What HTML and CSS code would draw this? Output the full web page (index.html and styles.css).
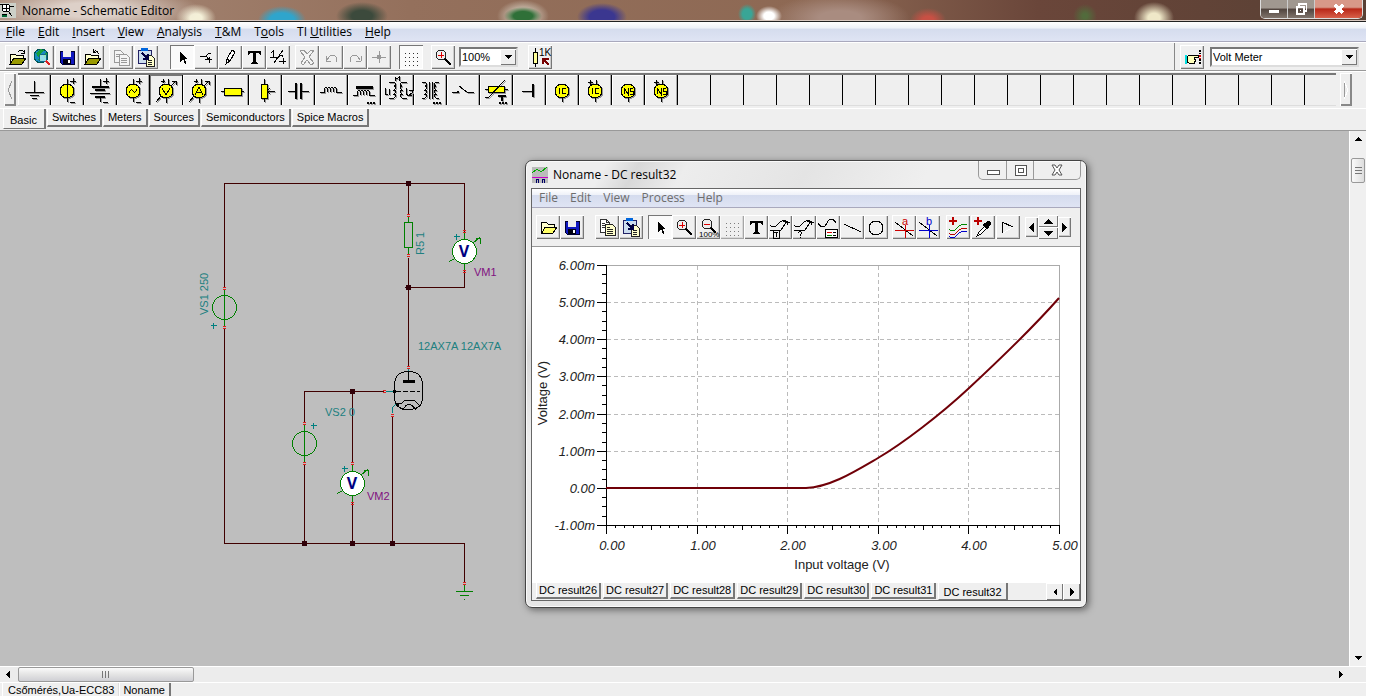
FILE: index.html
```html
<!DOCTYPE html>
<html lang="en">
<head>
<meta charset="utf-8">
<title>Noname - Schematic Editor</title>
<link rel="stylesheet" href="styles.css">
</head>
<body>
<svg class="defs" aria-hidden="true">
  <defs>
    <symbol id="open" viewBox="0 0 24 24">
      <path d="M5 18V9h5l1 1h7v3" fill="#ffc" stroke="#000"/><path d="M5 19l4-6h12l-4 6z" fill="#990" stroke="#000"/>
      <path d="M13 7q3-3 6 0m-3 1h3V5" fill="none" stroke="#000"/>
    </symbol>
    <symbol id="openb" viewBox="0 0 24 24">
      <path d="M5 18V9h5l1 1h7v3" fill="#ffc" stroke="#000"/><path d="M5 19l4-6h12l-4 6z" fill="#990" stroke="#000"/>
      <path d="M13 7q3-3 6 2m-6-5v3h3" fill="none" stroke="#000"/>
    </symbol>
    <symbol id="folder" viewBox="0 0 24 24">
      <path d="M5 18V8l2-1h3l2 2h6v3" fill="#ffc" stroke="#000"/><path d="M6 18l3-6h12l-4 6z" fill="#ff6" stroke="#000"/>
    </symbol>
    <symbol id="save" viewBox="0 0 24 24">
      <path d="M5 6h14v13H7l-2-2z" fill="#1018c0" stroke="#000030"/><path d="M8 6h8v6H8z" fill="#eee"/><path d="M8 14h8v5H8z" fill="#001"/><path d="M13 15h2v3h-2z" fill="#fff"/>
    </symbol>
    <symbol id="web" viewBox="0 0 24 24">
      <circle cx="11" cy="11" r="7" fill="#168cc0" stroke="#055"/><path d="M6 8l4-4 4 1-3 3 1 3-4 1zM13 9l4-1v4l-3 1zM7 14l4 0v3z" fill="#18a03c"/>
      <circle cx="13" cy="13" r="4" fill="#cff" fill-opacity=".7" stroke="#168"/><path d="M16 16l4 4" stroke="#d22" stroke-width="2"/>
    </symbol>
    <symbol id="copy" viewBox="0 0 24 24">
      <path d="M5 4h6l3 3v10H5zM11 4v3h3M7 8h3M7 10h4M7 12h4" fill="#fff" stroke="#333"/>
      <path d="M10 9h7l3 3v8H10zM12 12h3M12 14h6M12 16h6M12 18h6" fill="#ffc" stroke="#222"/>
    </symbol>
    <symbol id="copyg" viewBox="0 0 24 24">
      <path d="M5 5h6l3 3v9H5zM7 9h4M7 11h4" fill="#f4f4f4" stroke="#999"/><path d="M10 9h7l3 3v8H10zM12 13h6M12 15h6M12 17h6" fill="#f4f4f4" stroke="#999"/>
    </symbol>
    <symbol id="paste" viewBox="0 0 24 24">
      <path d="M4 5h13v13H4z" fill="#cde" stroke="#226"/><path d="M7 3h7v3H7z" fill="#06d"/><path d="M12 10h5l3 3v8h-8zM14 15h4M14 17h4M14 19h4" fill="#ffc" stroke="#222"/><path d="M8 8l5 5M9 14h5V9" fill="none" stroke="#004" stroke-width="2"/>
    </symbol>
    <symbol id="cursor" viewBox="0 0 24 24"><path d="M10 7v10l3-3 2 5 1-1-1-4h3z"/></symbol>
    <symbol id="wire" viewBox="0 0 24 24"><path d="M6 11h6M17 8h-2l-3 3 4 5M11 14h7M15 12v6" fill="none" stroke="#000"/></symbol>
    <symbol id="pencil" viewBox="0 0 24 24"><path d="M8 19l1-5 5-9 3 2-5 9zM9 14l3 2" fill="#fff" stroke="#000"/></symbol>
    <symbol id="tee" viewBox="0 0 24 24"><path d="M6 6h13v4h-1l-1-2h-3v9l2 1v1H9v-1l2-1V8H8l-1 2H6z"/></symbol>
    <symbol id="ratio" viewBox="0 0 24 24"><path d="M5 8l2-2v6M4 12h6M17 5L8 18M10 12h3q2-4 4 0M13 16h7M17 13v6" fill="none" stroke="#000"/></symbol>
    <symbol id="del" viewBox="0 0 24 24"><path d="M6 5h3l3 4 4-4h3l-5 7 5 6-3 2-4-5-4 5-2-2 4-6-5-6z" fill="#f4f4f4" stroke="#999"/></symbol>
    <symbol id="undo" viewBox="0 0 24 24"><path d="M7 16v-5M7 16h5M8 15q4-8 9-3 2 2 0 5" fill="none" stroke="#999"/></symbol>
    <symbol id="redo" viewBox="0 0 24 24"><path d="M18 16v-5M18 16h-5M17 15q-4-8-9-3-2 2 0 5" fill="none" stroke="#999"/></symbol>
    <symbol id="node" viewBox="0 0 24 24"><path d="M5 12h14M12 6v12" stroke="#999"/><path d="M10 10h4v4h-4z" fill="#999"/></symbol>
    <symbol id="grid" viewBox="0 0 24 24"><path d="M6 8h14M6 12h14M6 16h14M6 20h14" stroke="#333" stroke-dasharray="1 3"/></symbol>
    <symbol id="zoom" viewBox="0 0 24 24"><circle cx="10" cy="10" r="5" fill="#eee" stroke="#222"/><path d="M7 10h6M10 7v6" stroke="#d00" stroke-width="1"/><path d="M14 14l6 6" stroke="#000" stroke-width="2"/></symbol>
    <symbol id="zoomout" viewBox="0 0 24 24"><circle cx="11" cy="9" r="5" fill="#eee" stroke="#222"/><path d="M8 9h6" stroke="#d00"/><path d="M15 13l5 5" stroke="#000" stroke-width="2"/><text x="3" y="22" font-size="8">100%</text></symbol>
    <symbol id="res1k" viewBox="0 0 24 24"><path d="M5 7h4v11H5zM7 3v4M7 18v4" fill="#ff9" stroke="#000"/><path d="M15 14l6 6M15 19v-5h6" fill="none" stroke="#700" stroke-width="2"/><text x="11" y="11" font-size="10">1K</text></symbol>
    <symbol id="hand" viewBox="0 0 24 24"><path d="M5 10h2v9H5z" fill="#0dd"/><path d="M8 11l3-1h7v2h-4v2h1v2h-1v2H9l-2-1z" fill="#ffb" stroke="#000"/><path d="M20 5v4M20 14v6" stroke="#000" stroke-width="2" stroke-dasharray="2 1"/><path d="M20 10v4" stroke="#d00" stroke-width="2" stroke-dasharray="2 1"/></symbol>
    <symbol id="curvet" viewBox="0 0 24 24"><path d="M2 10q4 4 7 0t7-5l6 3M2 15h11l6-9M15 6h4v4" fill="none" stroke="#000"/><path d="M5 17h5M8 17v5M5 15v8h6v-8" fill="none" stroke="#000"/></symbol>
    <symbol id="curveq" viewBox="0 0 24 24"><path d="M2 10q4 4 7 0t7-5l6 3M2 15h11l6-9M15 6h4v4" fill="none" stroke="#000"/><path d="M6 18q2-3 4 0l-2 2v1M8 22v1" fill="none" stroke="#000"/></symbol>
    <symbol id="legend" viewBox="0 0 24 24"><path d="M2 8q5 8 9 0t9 0" fill="none" stroke="#000"/><path d="M9 14h12v8H9z" fill="#fff" stroke="#000"/><path d="M11 17h5" stroke="#d00"/><path d="M11 20h5" stroke="#080"/><path d="M17 17h3M17 20h3" stroke="#000"/></symbol>
    <symbol id="line" viewBox="0 0 24 24"><path d="M4 9l17 8" stroke="#000"/></symbol>
    <symbol id="circle" viewBox="0 0 24 24"><circle cx="12" cy="13" r="7" fill="none" stroke="#000"/></symbol>
    <symbol id="cura" viewBox="0 0 24 24"><path d="M3 7l18 14" stroke="#000"/><path d="M3 15h19M13 10v13" stroke="#c00"/><text x="10" y="10" font-size="11" fill="#c00">a</text></symbol>
    <symbol id="curb" viewBox="0 0 24 24"><path d="M3 7l18 14" stroke="#000"/><path d="M3 15h19M13 10v13" stroke="#00c"/><text x="10" y="10" font-size="11" fill="#00c">b</text></symbol>
    <symbol id="addcurve" viewBox="0 0 24 24"><path d="M3 6h8M7 2v8" stroke="#b00" stroke-width="2"/><g fill="none"><path d="M3 14q4 4 8-1t10-3" stroke="#080"/><path d="M3 18q4 4 8-1t10-3" stroke="#b00"/><path d="M3 21q4 4 8-1t10-3" stroke="#00c"/></g></symbol>
    <symbol id="pick" viewBox="0 0 24 24"><path d="M3 6h8M7 2v8" stroke="#b00" stroke-width="2"/><path d="M6 21l2-4 6-6 2 2-6 6z" fill="#fff" stroke="#000"/><path d="M12 10l6-4 2 2-4 6z" stroke="#000"/></symbol>
    <symbol id="tri" viewBox="0 0 24 24"><path d="M6 18V7l11 5" fill="none" stroke="#000"/><path d="M17 12L7 18" stroke="#fff"/></symbol>
    <symbol id="up" viewBox="0 0 8 4"><path d="M0 4l4-4 4 4z"/></symbol>
    <symbol id="down" viewBox="0 0 8 4"><path d="M0 0h8L4 4z"/></symbol>
    <symbol id="left" viewBox="0 0 4 8"><path d="M4 0v8L0 4z"/></symbol>
    <symbol id="right" viewBox="0 0 4 8"><path d="M0 0v8l4-4z"/></symbol>
    <symbol id="pm" viewBox="0 0 33 31"><path d="M19 6h6M22 3v6M19 27h5" stroke="#000"/></symbol>
  </defs>
</svg>

<div class="app">
  <header class="titlebar">
    <svg class="logo" viewBox="0 0 16 20" aria-hidden="true"><path d="M0 3h16v15H0z" fill="#cdd0c8"/><circle cx="6" cy="8" r="4" fill="#fff" stroke="#000"/><path d="M2 8h8M6 4v8M8 11l4 5M0 4h4M10 6h4M2 14h5" stroke="#000"/><path d="M2 15h5v2H2z" fill="#063"/></svg>
    <h1 class="title">Noname - Schematic Editor</h1>
    <div class="winbtns">
      <button class="wb" aria-label="Minimize"><svg viewBox="0 0 12 12"><path d="M1 7h10v3H1z" fill="#fff"/></svg></button>
      <button class="wb" aria-label="Restore"><svg viewBox="0 0 12 12"><path d="M3 0h9v9h-2v3H1V3h2zM5 2v1h5v4h1V2zM3 5v5h5V5z" fill="#fff" fill-rule="evenodd"/><path d="M5 7h1v1H5z" fill="#fff"/></svg></button>
      <button class="wb wb-close" aria-label="Close"><svg viewBox="0 0 12 12"><path d="M2 2l8 8M10 2l-8 8" stroke="#fff" stroke-width="3"/></svg></button>
    </div>
  </header>

  <nav class="menubar" aria-label="Main menu">
    <button><u>F</u>ile</button><button><u>E</u>dit</button><button><u>I</u>nsert</button><button><u>V</u>iew</button><button><u>A</u>nalysis</button><button><u>T</u>&amp;M</button><button>T<u>o</u>ols</button><button>TI <u>U</u>tilities</button><button><u>H</u>elp</button>
  </nav>

  <div class="toolbar">
    <div class="group spaced">
      <button class="tb" aria-label="Open"><svg><use href="#open"/></svg></button>
      <button class="tb" aria-label="Open from web"><svg><use href="#web"/></svg></button>
      <button class="tb" aria-label="Save"><svg><use href="#save"/></svg></button>
      <button class="tb" aria-label="Close file"><svg><use href="#openb"/></svg></button>
    </div>
    <div class="group spaced">
      <button class="tb" aria-label="Copy"><svg><use href="#copyg"/></svg></button>
      <button class="tb" aria-label="Paste"><svg><use href="#paste"/></svg></button>
    </div>
    <div class="group far">
      <button class="tb on" aria-label="Select"><svg><use href="#cursor"/></svg></button>
      <button class="tb" aria-label="Last component"><svg><use href="#wire"/></svg></button>
      <button class="tb" aria-label="Wire"><svg><use href="#pencil"/></svg></button>
      <button class="tb" aria-label="Text"><svg><use href="#tee"/></svg></button>
      <button class="tb" aria-label="Input output"><svg><use href="#ratio"/></svg></button>
    </div>
    <div class="group">
      <button class="tb" aria-label="Delete"><svg><use href="#del"/></svg></button>
      <button class="tb" aria-label="Rotate left"><svg><use href="#undo"/></svg></button>
      <button class="tb" aria-label="Rotate right"><svg><use href="#redo"/></svg></button>
      <button class="tb" aria-label="Mirror"><svg><use href="#node"/></svg></button>
    </div>
    <div class="group wide"><button class="tb on" aria-label="Grid"><svg><use href="#grid"/></svg></button></div>
    <div class="group wide"><button class="tb" aria-label="Zoom"><svg><use href="#zoom"/></svg></button></div>
    <label class="combo combo-zoom"><select aria-label="Zoom level"><option>100%</option></select><span class="drop"><svg><use href="#down"/></svg></span></label>
    <div class="group wide"><button class="tb" aria-label="Component values"><svg><use href="#res1k"/></svg></button></div>
    <div class="finder">
      <button class="tb" aria-label="Find component"><svg><use href="#hand"/></svg></button>
      <label class="combo combo-part"><select aria-label="Component"><option>Volt Meter</option></select><span class="drop"><svg><use href="#down"/></svg></span></label>
    </div>
  </div>

  <div class="palette">
    <button class="pgbtn" aria-label="Scroll left"><svg viewBox="0 0 8 20"><path d="M6 1L2 10l4 9" fill="none" stroke="#999"/></svg></button>
    <div class="cells">
      <button aria-label="Ground"><svg viewBox="0 0 33 31"><path d="M16 6v11M7 17h19M12 20h9M14 23h5" stroke="#000"/></svg></button>
      <button aria-label="Voltage source"><svg viewBox="0 0 33 31"><circle cx="16" cy="16" r="7"/><path d="M16 4v23" stroke="#000"/><use href="#pm"/></svg></button>
      <button aria-label="Battery"><svg viewBox="0 0 33 31"><path d="M16 4v7M6 18h20M16 23v4" stroke="#000"/><path d="M8 12h17M11 15h10M11 22h10" stroke="#000" stroke-width="2"/><use href="#pm"/></svg></button>
      <button aria-label="Generator"><svg viewBox="0 0 33 31"><circle cx="16" cy="16" r="7"/><path d="M16 4v5M16 23v4M12 18q2-5 4-2t4-2" fill="none" stroke="#000"/><use href="#pm"/></svg></button>
      <button class="on" aria-label="Volt meter"><svg viewBox="0 0 33 31"><circle cx="16" cy="16" r="7"/><path d="M11 6h4M13 4v4M18 4v5M16 23v5M11 21l-5 6M21 11l5-5M22 6h4v4M12 13l4 7 4-7" fill="none" stroke="#000"/></svg></button>
      <button aria-label="Ampere meter"><svg viewBox="0 0 33 31"><circle cx="16" cy="16" r="7"/><path d="M11 6h4M13 4v4M18 4v5M16 23v5M11 21l-5 6M21 11l5-5M22 6h4v4M12 20l4-8 4 8M14 17h5" fill="none" stroke="#000"/></svg></button>
      <button aria-label="Resistor"><svg viewBox="0 0 33 31"><path d="M5 16h23" stroke="#000"/><path d="M8 13h17v7H8z" fill="#ff0" stroke="#000"/></svg></button>
      <button aria-label="Potentiometer"><svg viewBox="0 0 33 31"><path d="M15 4v23M18 16h8M21 13l-3 3 3 3" fill="none" stroke="#000"/><path d="M12 9h6v14h-6z" fill="#ff0" stroke="#000"/></svg></button>
      <button aria-label="Capacitor"><svg viewBox="0 0 33 31"><path d="M6 16h8M19 16h8" stroke="#000"/><path d="M14 8v16M19 8v16" stroke="#000" stroke-width="2"/></svg></button>
      <button aria-label="Inductor"><svg viewBox="0 0 33 31"><path d="M5 17h4q0-5 3-4v4q0-5 3-4v4q0-5 3-4v4q0-5 3-4v4h6" fill="none" stroke="#000"/></svg></button>
      <button aria-label="Iron core inductor"><svg viewBox="0 0 33 31"><path d="M8 12h17" stroke="#000" stroke-width="3"/><path d="M5 20h4q0-5 3-4v4q0-5 3-4v4q0-5 3-4v4q0-5 3-4v4h6" fill="none" stroke="#000"/><path d="M19 28h8" stroke="#000" stroke-width="2" stroke-dasharray="2 1"/></svg></button>
      <button aria-label="Coupled inductors"><svg viewBox="0 0 33 31"><path d="M8 7h5q4 4 0 4q4 0 0 4q4 0 0 4q4 0 0 4H8M26 7h-5q-4 4 0 4q-4 0 0 4q-4 0 0 4q-4 0 0 4h5M14 6V2l2 2 2-2v4M4 13v6h3M8 14v6M25 13v6h2M28 15h3v3l-3 2h3" fill="none" stroke="#000"/></svg></button>
      <button aria-label="Transformer"><svg viewBox="0 0 33 31"><path d="M8 7h3q4 4 0 4q4 0 0 4q4 0 0 4q4 0 0 4H8M25 7h-3q-4 4 0 4q-4 0 0 4q-4 0 0 4q-4 0 0 4h3M15 7v17M18 7v17" fill="none" stroke="#000"/><path d="M19 28h8" stroke="#000" stroke-width="2" stroke-dasharray="2 1"/></svg></button>
      <button aria-label="Switch"><svg viewBox="0 0 33 31"><path d="M5 17h5M12 11l8 6h7" fill="none" stroke="#000"/><path d="M10 16h2v2h-2z"/></svg></button>
      <button aria-label="Thermistor"><svg viewBox="0 0 33 31"><path d="M5 14h23" stroke="#000"/><path d="M8 11h16v6H8z" fill="#ff0" stroke="#000"/><path d="M5 22h4L25 5" fill="none" stroke="#000"/><path d="M18 21h8M22 21v5" stroke="#000" stroke-width="2"/><path d="M19 28h8" stroke="#000" stroke-width="2" stroke-dasharray="2 1"/></svg></button>
      <button aria-label="Jumper"><svg viewBox="0 0 33 31"><path d="M9 16h11" stroke="#000"/><path d="M20 9v13" stroke="#000" stroke-width="2"/></svg></button>
      <button aria-label="Initial condition"><svg viewBox="0 0 33 31"><circle cx="16" cy="16" r="7"/><path d="M16 23v4M13 13v6M20 14q-4-2-4 2t4 2" fill="none" stroke="#000"/></svg></button>
      <button aria-label="Differential initial condition"><svg viewBox="0 0 33 31"><circle cx="16" cy="16" r="7"/><path d="M16 23v4M13 13v6M20 14q-4-2-4 2t4 2M9 7h5M11 5v5M17 5v4" fill="none" stroke="#000"/></svg></button>
      <button aria-label="Nodeset"><svg viewBox="0 0 33 31"><circle cx="16" cy="16" r="7"/><path d="M16 23v4M12 19v-6l4 6v-6M21 13h-3v3h3v3h-3" fill="none" stroke="#000"/></svg></button>
      <button aria-label="Differential nodeset"><svg viewBox="0 0 33 31"><circle cx="16" cy="16" r="7"/><path d="M16 23v4M12 19v-6l4 6v-6M21 13h-3v3h3v3h-3M9 7h5M11 5v5M17 5v4" fill="none" stroke="#000"/></svg></button>
    </div>
    <button class="pgbtn" aria-label="Scroll right"><svg viewBox="0 0 8 20"><path d="M2 19V1" stroke="#999"/><path d="M2 1l4 9-4 9" fill="none" stroke="#fff"/></svg></button>
  </div>

  <nav class="parttabs" aria-label="Component groups">
    <button class="active">Basic</button><button>Switches</button><button>Meters</button><button>Sources</button><button>Semiconductors</button><button>Spice Macros</button>
  </nav>

  <main class="workspace">
    <div class="canvas">
      <svg class="schematic" viewBox="0 131 520 535" role="img" aria-label="Circuit schematic">
        <g class="strokes">
          <path class="wires" d="M225 287V184H465V235M409 184V215M409 258V367M465 271V288H409M225 328V544H465V583M305 422V392H384M353 392V462M305 464V544M353 503V544M393 417V544"/>
          <g class="dots"><circle cx="409" cy="184" r="3"/><circle cx="409" cy="288" r="3"/><circle cx="353" cy="392" r="3"/><circle cx="305" cy="544" r="3"/><circle cx="353" cy="544" r="3"/><circle cx="393" cy="544" r="3"/></g>
          <g class="parts"><path d="M225 289V326M305 424V463M409 217V223M409 248V254M405 223h8v25h-8zM465 233V239M465 263V270M473 244l8-7M476 239h5v5M455 259l-5 3M353 465V471M353 495V502M361 476l8-7M364 471h5v5M343 491l-5 3M465 585V591M456 592h17M460 596h9M464 600h1"/><circle cx="225" cy="308" r="12"/><circle cx="305" cy="444" r="12"/><circle class="meter" cx="465" cy="252" r="12"/><circle class="meter" cx="353" cy="484" r="12"/></g>
          <path class="leads" d="M409 368v4M386 392h8M393 413v-5l4-4M211 326h6M214 323v6M311 426h6M314 423v6M454 237h6M457 234v6M342 469h6M345 466v6"/>
          <g class="tube"><path d="M395 386q0-14 14-14t14 14v12q0 12-14 12t-14-12zM409 372v9"/><path d="M396 392h24" stroke-dasharray="5 2"/><path d="M403 382h12" stroke-width="3"/><path d="M399 404h3l3-3h10l5 5M403 411q6-12 14 0"/><circle cx="395" cy="392" r="1"/><circle cx="398" cy="405" r="1"/></g>
        </g>
        <path class="pins" d="M223 287h3M223 289h3M223 326h3M223 328h3M407 214h3M407 216h3M407 254h3M407 256h3M463 230h3M463 232h3M463 270h3M463 272h3M407 366h3M407 368h3M383 390h3M383 392h3M391 414h3M391 416h3M303 422h3M303 424h3M303 462h3M303 464h3M351 462h3M351 464h3M351 502h3M351 504h3M463 582h3M463 584h3"/>
        <g class="labels"><text x="418" y="350">12AX7A 12AX7A</text><text x="325" y="416">VS2 0</text><text transform="translate(208 315) rotate(-90)">VS1 250</text><text transform="translate(424 255) rotate(-90)">R5 1</text></g>
        <g class="names"><text x="474" y="276">VM1</text><text x="367" y="500">VM2</text></g>
        <g class="vees"><text x="464" y="257">V</text><text x="352" y="489">V</text></g>
      </svg>

      <section class="result" aria-label="DC result32">
        <header class="rtitle">
          <svg class="rlogo" viewBox="0 0 16 16" aria-hidden="true"><path d="M0 0h16v16H0z" fill="#bbb"/><path d="M0 6l5-4 4 3 6-5" fill="none" stroke="#0a0"/><path d="M0 10h16" stroke="#c0c"/><path d="M4 16v-4h2v4M10 16v-4h2v4" fill="none" stroke="#006"/></svg>
          <h2 class="title">Noname - DC result32</h2>
          <div class="rbtns">
            <button aria-label="Minimize"><svg viewBox="0 0 14 12"><path d="M1 6h12v4H1z" fill="#fff" stroke="#555"/></svg></button>
            <button aria-label="Maximize"><svg viewBox="0 0 14 12"><path d="M2 1h11v10H2zM5 4h5v4H5z" fill="#fff" stroke="#555"/></svg></button>
            <button aria-label="Close"><svg class="smooth" viewBox="0 0 14 12"><path d="M2 1h3l2 3 2-3h3L9 6l3 5H9L7 8l-2 3H2l3-5z" fill="#fff" stroke="#555"/></svg></button>
          </div>
        </header>
        <div class="rbody">
          <nav class="menubar rmenu" aria-label="Result menu"><button>File</button><button>Edit</button><button>View</button><button>Process</button><button>Help</button></nav>
          <div class="rtools">
            <div class="group">
              <button class="tb" aria-label="Open"><svg><use href="#folder"/></svg></button>
              <button class="tb" aria-label="Save"><svg><use href="#save"/></svg></button>
            </div>
            <div class="group mid">
              <button class="tb" aria-label="Copy"><svg><use href="#copy"/></svg></button>
              <button class="tb" aria-label="Paste"><svg><use href="#paste"/></svg></button>
            </div>
            <div class="group">
              <button class="tb on" aria-label="Select"><svg><use href="#cursor"/></svg></button>
              <button class="tb" aria-label="Zoom in"><svg><use href="#zoom"/></svg></button>
              <button class="tb" aria-label="Zoom 100%"><svg><use href="#zoomout"/></svg></button>
              <button class="tb faint" aria-label="Grid"><svg><use href="#grid"/></svg></button>
              <button class="tb" aria-label="Text"><svg><use href="#tee"/></svg></button>
              <button class="tb" aria-label="Curve label"><svg><use href="#curvet"/></svg></button>
              <button class="tb" aria-label="Curve query"><svg><use href="#curveq"/></svg></button>
              <button class="tb" aria-label="Legend"><svg><use href="#legend"/></svg></button>
              <button class="tb" aria-label="Line"><svg><use href="#line"/></svg></button>
              <button class="tb" aria-label="Ellipse"><svg><use href="#circle"/></svg></button>
            </div>
            <div class="group">
              <button class="tb" aria-label="Cursor a"><svg><use href="#cura"/></svg></button>
              <button class="tb" aria-label="Cursor b"><svg><use href="#curb"/></svg></button>
            </div>
            <div class="group spaced">
              <button class="tb" aria-label="Add curves"><svg><use href="#addcurve"/></svg></button>
              <button class="tb" aria-label="Pick curve"><svg><use href="#pick"/></svg></button>
              <button class="tb" aria-label="Post process"><svg><use href="#tri"/></svg></button>
            </div>
            <div class="group nav">
              <button class="tb side" aria-label="Previous"><svg><use href="#left"/></svg></button>
              <span class="updown"><button aria-label="Up"><svg><use href="#up"/></svg></button><button aria-label="Down"><svg><use href="#down"/></svg></button></span>
              <button class="tb side" aria-label="Next"><svg><use href="#right"/></svg></button>
            </div>
          </div>
          <svg class="chart" viewBox="532 247 548 336" role="img" aria-label="Voltage against input voltage">
            <g class="strokes">
              <path class="frame" d="M606 266H1060V525"/>
              <path class="gridlines" d="M607 303H1059M607 340H1059M607 377H1059M607 415H1059M607 452H1059M607 489H1059M698 266V525M788 266V525M879 266V525M969 266V525"/>
              <path class="axis" d="M607 265V534M597 526H1060M597 266h10M597 303h10M597 340h10M597 377h10M597 415h10M597 452h10M597 489h10M602 275h5M602 284h5M602 294h5M602 312h5M602 322h5M602 331h5M602 349h5M602 359h5M602 368h5M602 386h5M602 396h5M602 405h5M602 424h5M602 433h5M602 443h5M602 461h5M602 470h5M602 480h5M602 498h5M602 507h5M602 517h5M698 526v8M788 526v8M879 526v8M969 526v8M1060 526v8M652 526v4M743 526v4M833 526v4M924 526v4M1015 526v4M616 526v2M625 526v2M634 526v2M643 526v2M661 526v2M670 526v2M679 526v2M688 526v2M707 526v2M716 526v2M725 526v2M734 526v2M752 526v2M761 526v2M770 526v2M779 526v2M797 526v2M806 526v2M815 526v2M824 526v2M842 526v2M851 526v2M860 526v2M869 526v2M888 526v2M897 526v2M906 526v2M915 526v2M933 526v2M942 526v2M951 526v2M960 526v2M978 526v2M987 526v2M996 526v2M1005 526v2M1024 526v2M1033 526v2M1042 526v2M1051 526v2"/>
            </g>
            <path class="curve" d="M606 488H806C830 487 854 472 878 458S940 415 968 389S1030 331 1059 298"/>
            <g class="ynums"><text x="595" y="270">6.00m</text><text x="595" y="307">5.00m</text><text x="595" y="344">4.00m</text><text x="595" y="381">3.00m</text><text x="595" y="419">2.00m</text><text x="595" y="456">1.00m</text><text x="595" y="493">0.00</text><text x="595" y="530">-1.00m</text></g>
            <g class="xnums"><text x="612" y="550">0.00</text><text x="703" y="550">1.00</text><text x="793" y="550">2.00</text><text x="884" y="550">3.00</text><text x="974" y="550">4.00</text><text x="1065" y="550">5.00</text></g>
            <g class="axnames"><text x="842" y="569">Input voltage (V)</text><text transform="translate(547 393) rotate(-90)">Voltage (V)</text></g>
          </svg>
          <nav class="rtabs" aria-label="Results">
            <button>DC result26</button><button>DC result27</button><button>DC result28</button><button>DC result29</button><button>DC result30</button><button>DC result31</button><button class="active">DC result32</button>
            <div class="pager"><button aria-label="Previous tabs"><svg><use href="#left"/></svg></button><button aria-label="Next tabs"><svg><use href="#right"/></svg></button></div>
          </nav>
        </div>
      </section>
    </div>
    <div class="vscroll"><button aria-label="Scroll up"><svg><use href="#up"/></svg></button><div class="vthumb"></div><button class="end" aria-label="Scroll down"><svg><use href="#down"/></svg></button></div>
  </main>

  <div class="hscroll"><button aria-label="Scroll left"><svg><use href="#left"/></svg></button><div class="hthumb"></div><button class="end" aria-label="Scroll right"><svg><use href="#right"/></svg></button></div>
  <nav class="doctabs" aria-label="Documents"><button>Csőmérés,Ua-ECC83</button><button class="active">Noname</button></nav>
</div>
</body>
</html>
```
FILE: styles.css
```css
* { box-sizing: border-box; }
body { margin: 0; background: #fff; font-family: "Liberation Sans", sans-serif; font-size: 12px; color: #000; }
button { margin: 0; padding: 0; border: 0; background: none; font: inherit; color: inherit; display: flex; align-items: center; justify-content: center; flex: none; }
h1, h2 { margin: 0; font-weight: 400; }
svg { shape-rendering: crispEdges; display: block; }
.smooth { shape-rendering: auto; }
.defs { position: absolute; width: 0; height: 0; }

.app { height: 100vh; margin-right: 12px; display: flex; flex-direction: column; overflow: hidden; background: #efefef; }
.app > * { flex: none; }

.titlebar {
  display: flex; align-items: flex-start; height: 22px; border-bottom: 1px solid #222; box-shadow: inset 0 -1px #d8c8c0;
  background:
    radial-gradient(ellipse 110px 24px at 90px 10px, #ddd0c8 30%, transparent),
    radial-gradient(ellipse 20px 14px at 196px 18px, #f4f0d8 30%, transparent),
    radial-gradient(ellipse 24px 14px at 282px 20px, #2fa5cc 50%, transparent),
    radial-gradient(ellipse 26px 14px at 362px 16px, #3c4a3c 40%, transparent),
    radial-gradient(ellipse 19px 9px at 523px 16px, #2f7038 50%, transparent),
    radial-gradient(ellipse 26px 16px at 523px 16px, #c0b0a0 50%, transparent),
    radial-gradient(ellipse 25px 14px at 602px 17px, #3b3790 50%, transparent),
    radial-gradient(ellipse 9px 10px at 747px 14px, #39a596 50%, transparent),
    radial-gradient(ellipse 13px 10px at 769px 16px, #fff 40%, transparent),
    radial-gradient(ellipse 70px 24px at 840px 18px, #a98c80 30%, transparent),
    radial-gradient(ellipse 18px 12px at 928px 20px, #c85044 30%, transparent),
    radial-gradient(ellipse 12px 12px at 1085px 16px, #526b3c 20%, transparent),
    radial-gradient(ellipse 20px 16px at 1154px 18px, #efe8c8 30%, transparent),
    linear-gradient(90deg, #a88a78, #94705c 30%, #8d6853 60%, #6a463a 76%, #584034);
}
.logo { width: 16px; height: 20px; }
.title { font: 12px/22px "Open Sans", sans-serif; }
.titlebar .title { padding-left: 6px; }
.winbtns { display: flex; margin: 0 3px 0 auto; border: 1px solid #ddd; border-top: 0; border-radius: 0 0 5px 5px; overflow: hidden; }
.wb { width: 27px; height: 18px; border-right: 1px solid #ccc; background: linear-gradient(#a09890 45%, #50443e 50%, #80746c); }
.wb svg { width: 12px; height: 12px; }
.wb-close { width: 47px; border: 0; background: linear-gradient(#d89888 40%, #b82818 50%, #d8604a); }

.menubar { display: flex; height: 20px; padding-left: 6px; gap: 13px; font: 12px/18px "Open Sans", sans-serif; background: linear-gradient(#fff, #eef1f8 33%, #d5dcee 36%, #dfe4f4); border-bottom: 1px solid #a9a9bd; }
.menubar button { display: block; }

.toolbar { display: flex; align-items: center; height: 29px; padding-left: 5px; border-top: 1px solid #fff; border-bottom: 1px solid #999; }
.group { display: flex; }
.spaced { gap: 1px; }
.toolbar .group { margin-right: 5px; }
.toolbar .group + .far { margin-left: 7px; }
.toolbar .wide { margin-left: 3px; }
.toolbar .combo-zoom + .wide { margin-left: 10px; }
.tb { width: 24px; height: 24px; background: #f0f0f0; box-shadow: inset 1px 1px #fff, inset -1px -1px #777, inset -2px -2px #ccc; }
.tb svg { width: 24px; height: 24px; }
.tb.on { background: #fafafa; box-shadow: inset 1px 1px #777, inset -1px -1px #fff; }
.faint { opacity: .6; }
.combo { position: relative; height: 20px; border: 2px solid; border-color: #777 #ddd #ddd #777; background: #fff; display: flex; }
.combo select { appearance: none; border: 0; background: none; width: 100%; padding: 0 1px; font: 11px/16px "Liberation Sans", sans-serif; color: #000; }
.drop { position: absolute; right: 0; top: 0; width: 16px; height: 16px; display: flex; align-items: center; justify-content: center; background: #efefef; box-shadow: inset 1px 1px #fff, inset -1px -1px #777; pointer-events: none; }
.drop svg { width: 7px; height: 4px; }
.combo-zoom { width: 59px; margin-left: -1px; }
.combo-part { width: 149px; }
.finder { display: flex; align-items: center; gap: 6px; height: 100%; margin-left: auto; padding: 0 7px 0 5px; border-left: 1px solid #888; }

.palette { display: flex; height: 37px; padding: 1px 14px 0 4px; gap: 2px; border-top: 1px solid #fff; }
.pgbtn { width: 12px; height: 33px; background: #eee; box-shadow: inset 1px 1px #fff, inset -2px -2px #888; }
.pgbtn:last-child { margin-left: 2px; }
.pgbtn svg { width: 8px; height: 20px; }
.cells { flex: 1; display: flex; height: 33px; border-top: 2px solid #777; border-bottom: 1px solid #ddd; background: repeating-linear-gradient(90deg, transparent 0 32px, #000 32px 33px); overflow: hidden; }
.cells button { width: 33px; box-shadow: inset -1px 0 #000, inset -2px 0 #aaa, inset 1px 1px #fff; }
.cells button.on { box-shadow: inset -1px 0 #000, inset 1px 1px #777; }
.cells svg { width: 33px; height: 31px; filter: drop-shadow(1px 1px 0 #999); }
.cells circle { fill: #ff0; stroke: #000; }

.parttabs { display: flex; align-items: flex-start; height: 23px; padding-left: 3px; gap: 1px; border-top: 1px solid #fff; border-bottom: 1px solid #999; font-size: 11px; }
.parttabs button, .rtabs > button { height: 18px; padding: 0 4px; border-left: 1px solid #fff; border-right: 2px solid #777; border-bottom: 2px solid #777; }
.parttabs .active { height: 20px; padding: 2px 7px 0 6px; border-bottom-width: 1px; }

.workspace { flex: 1 1 0; min-height: 0; display: flex; }
.canvas { flex: 1; min-width: 0; position: relative; background: #bebebe; overflow: hidden; }
.schematic { width: 520px; height: 535px; }
.strokes { transform: translate(-.5px, -.5px); }
.wires { fill: none; stroke: #400000; }
.dots { fill: #300008; }
.parts { fill: none; stroke: #008000; }
.parts .meter { fill: #fff; }
.leads { fill: none; stroke: #008080; }
.pins { stroke: #e02020; transform: translate(0, .5px); }
.tube { fill: none; stroke: #000; }
.tube circle { fill: #000; }
.labels { fill: #208080; font-size: 11px; }
.names { fill: #801080; font-size: 11px; }
.vees { fill: #000080; font: bold 16px "Open Sans", sans-serif; text-anchor: middle; }

.result { position: absolute; left: 525px; top: 29px; width: 562px; padding: 0 5px 6px; border: 1px solid #444; border-radius: 7px; background: linear-gradient(120deg, #eee 10%, #d8d8d8 14%, #ededed 20%, #e4e4e4 35%, #efefef 50%); box-shadow: inset 0 0 0 1px #fafafa, 2px 2px 7px #666; }
.rtitle { display: flex; height: 27px; align-items: center; }
.rlogo { width: 16px; height: 16px; margin: 0 5px 0 1px; }
.rbtns { display: flex; align-self: flex-start; margin-left: auto; border: 1px solid #999; border-top: 0; border-radius: 0 0 5px 5px; }
.rbtns button { width: 27px; height: 18px; }
.rbtns button + button { border-left: 1px solid #999; }
.rbtns button:last-child { width: 47px; }
.rbtns svg { width: 14px; height: 12px; }
.rbody { border: 1px solid #666; background: #efefef; }
.rmenu { height: 19px; padding-left: 7px; gap: 12px; color: #6d6d6d; }
.rtools { display: flex; align-items: center; height: 39px; padding-left: 4px; gap: 4px; border-bottom: 1px solid #999; }
.rtools .mid { margin: 0 1px 0 7px; }
.rtools .spaced { margin-left: 2px; }
.nav { align-items: center; margin-left: 1px; }
.nav .side { width: 13px; height: 20px; }
.nav .side svg { width: 5px; height: 9px; }
.updown { display: flex; flex-direction: column; width: 20px; }
.updown button { height: 12px; box-shadow: inset 1px 1px #fff, inset -1px -1px #777; }
.updown svg { width: 9px; height: 5px; }
.chart { width: 100%; height: auto; background: #fff; }
.frame { fill: none; stroke: #aaa; }
.gridlines { stroke: #bbb; stroke-dasharray: 4 3; }
.axis { fill: none; stroke: #000; }
.curve { fill: none; stroke: #700008; stroke-width: 2; shape-rendering: auto; }
.chart text { font-size: 13px; fill: #222; }
.ynums, .xnums { font-style: italic; }
.ynums { text-anchor: end; }
.xnums, .axnames { text-anchor: middle; }
.rtabs { display: flex; align-items: flex-start; height: 17px; padding-left: 4px; gap: 2px; font-size: 11px; }
.rtabs > button { height: 16px; padding: 0 2px; }
.rtabs > .active { height: 17px; padding: 2px 4px 0; border-bottom-width: 1px; }
.pager { display: flex; margin-left: auto; }
.pager button { width: 17px; height: 17px; box-shadow: inset 1px 1px #fff, inset -1px -1px #777; }
.pager svg { width: 4px; height: 8px; }

.vscroll { width: 17px; flex: none; display: flex; flex-direction: column; align-items: center; background: #f0f0f0; border-left: 1px solid #fff; }
.vscroll button, .hscroll button { width: 16px; height: 16px; }
.vscroll svg { width: 7px; height: 4px; }
.vthumb { width: 14px; height: 25px; margin-top: 11px; border: 1px solid #999; border-radius: 2px; background: repeating-linear-gradient(#777 0 1px, transparent 1px 3px) center / 7px 8px no-repeat, linear-gradient(90deg, #fafafa, #ddd); }
.vscroll .end { margin-top: auto; }
.hscroll { display: flex; align-items: center; height: 17px; padding-right: 17px; border-top: 1px solid #fff; border-bottom: 1px solid #fff; background: #ececec; }
.hscroll svg { width: 4px; height: 7px; }
.hthumb { width: 176px; height: 15px; margin-left: 2px; border: 1px solid #999; border-radius: 2px; background: repeating-linear-gradient(90deg, #777 0 1px, transparent 1px 3px) center / 8px 7px no-repeat, linear-gradient(#fafafa, #e4e4e4 50%, #cfcfd4); }
.hscroll .end { margin-left: auto; }
.doctabs { display: flex; align-items: flex-start; height: 13px; padding-left: 2px; overflow: hidden; font-size: 11px; line-height: 12px; }
.doctabs button { height: 13px; padding: 0 4px 0 5px; border-left: 1px solid #fff; border-right: 1px solid #ddd; }
.doctabs .active { padding: 1px 4px 0 3px; border-right: 2px solid #777; }
```
